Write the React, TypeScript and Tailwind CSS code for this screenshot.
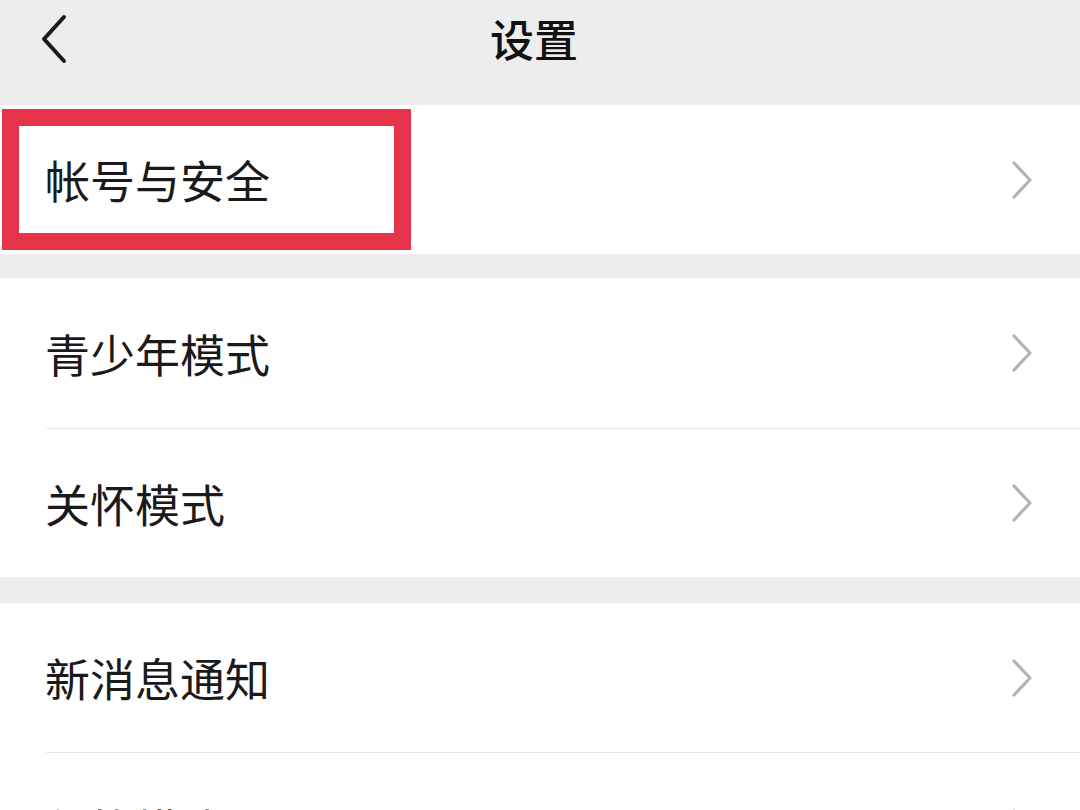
import React from 'react';

const rowFont = { fontFamily: '"Noto Sans CJK SC", "Noto Sans", sans-serif' };

function ChevronRight() {
  return (
    <svg width="22" height="40" viewBox="0 0 22 40" fill="none" className="shrink-0">
      <path d="M3 3 L19 20 L3 37" stroke="#b3b3b3" strokeWidth="3.2" strokeLinecap="round" strokeLinejoin="round" />
    </svg>
  );
}

function Row({ label, height, divider }: { label: string; height: string; divider?: boolean }) {
  return (
    <div className="bg-white">
      <div className={`flex items-center justify-between pl-[45px] pr-[47px] ${height}`}>
        <span className="text-[45px] leading-none text-[#1a1a1a]" style={rowFont}>
          {label}
        </span>
        <ChevronRight />
      </div>
      {divider && <div className="ml-[46px] h-px bg-[#e8e8e8]" />}
    </div>
  );
}

export default function App() {
  return (
    <div className="w-[1080px] h-[810px] overflow-hidden bg-[#ededed]" style={rowFont}>
      {/* Header */}
      <div className="relative flex h-[105px] items-center justify-center">
        <button className="absolute left-[39px] top-[14px]">
          <svg width="30" height="50" viewBox="0 0 30 50" fill="none">
            <path d="M25 3 L5 25 L25 47" stroke="#1a1a1a" strokeWidth="4" strokeLinecap="round" strokeLinejoin="round" />
          </svg>
        </button>
        <h1 className="text-[44px] font-medium text-[#111] leading-none -mt-[30px] -ml-[12px]">设置</h1>
      </div>

      {/* Group 1 */}
      <div className="relative">
        <Row label="帐号与安全" height="h-[149px]" />
        <div className="absolute left-[2px] top-[4px] h-[141px] w-[409px] border-[17px] border-[#e8344a]" />
      </div>

      <div className="h-[24px]" />

      {/* Group 2 */}
      <Row label="青少年模式" height="h-[150px]" divider />
      <Row label="关怀模式" height="h-[148px]" />

      <div className="h-[26px]" />

      {/* Group 3 */}
      <Row label="新消息通知" height="h-[149px]" divider />
      <Row label="勿扰模式" height="h-[150px]" />
    </div>
  );
}
